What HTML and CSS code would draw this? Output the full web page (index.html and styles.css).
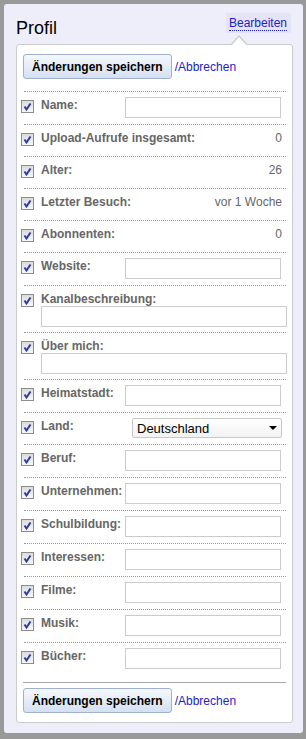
FILE: index.html
```html
<!DOCTYPE html>
<html lang="de">
<head>
<meta charset="UTF-8">
<meta name="viewport" content="width=device-width, initial-scale=1.0">
<title>Profil</title>
<link rel="stylesheet" href="styles.css">
</head>
<body>

<div class="panel">
  <div class="panel-head">
    <h1>Profil</h1>
    <div class="edit-tab"><a href="#">Bearbeiten</a></div>
  </div>

  <div class="box">
    <div class="actions">
      <button class="save">Änderungen speichern</button>
      <a href="#">/Abbrechen</a>
    </div>

    <div class="row">
      <span class="cb"><svg viewBox="0 0 11 11" width="11" height="11"><path d="M2.5 5.5 L4.5 8.5 L8.5 2.5" fill="none" stroke="#2c3c9c" stroke-width="2"/></svg></span>
      <label>Name:</label>
      <input type="text" class="field">
    </div>
    <div class="row">
      <span class="cb"><svg viewBox="0 0 11 11" width="11" height="11"><path d="M2.5 5.5 L4.5 8.5 L8.5 2.5" fill="none" stroke="#2c3c9c" stroke-width="2"/></svg></span>
      <label>Upload-Aufrufe insgesamt:</label>
      <span class="value">0</span>
    </div>
    <div class="row">
      <span class="cb"><svg viewBox="0 0 11 11" width="11" height="11"><path d="M2.5 5.5 L4.5 8.5 L8.5 2.5" fill="none" stroke="#2c3c9c" stroke-width="2"/></svg></span>
      <label>Alter:</label>
      <span class="value">26</span>
    </div>
    <div class="row">
      <span class="cb"><svg viewBox="0 0 11 11" width="11" height="11"><path d="M2.5 5.5 L4.5 8.5 L8.5 2.5" fill="none" stroke="#2c3c9c" stroke-width="2"/></svg></span>
      <label>Letzter Besuch:</label>
      <span class="value">vor 1 Woche</span>
    </div>
    <div class="row">
      <span class="cb"><svg viewBox="0 0 11 11" width="11" height="11"><path d="M2.5 5.5 L4.5 8.5 L8.5 2.5" fill="none" stroke="#2c3c9c" stroke-width="2"/></svg></span>
      <label>Abonnenten:</label>
      <span class="value">0</span>
    </div>
    <div class="row">
      <span class="cb"><svg viewBox="0 0 11 11" width="11" height="11"><path d="M2.5 5.5 L4.5 8.5 L8.5 2.5" fill="none" stroke="#2c3c9c" stroke-width="2"/></svg></span>
      <label>Website:</label>
      <input type="text" class="field">
    </div>
    <div class="row tall">
      <div class="line">
        <span class="cb"><svg viewBox="0 0 11 11" width="11" height="11"><path d="M2.5 5.5 L4.5 8.5 L8.5 2.5" fill="none" stroke="#2c3c9c" stroke-width="2"/></svg></span>
        <label>Kanalbeschreibung:</label>
      </div>
      <input type="text" class="wide">
    </div>
    <div class="row tall">
      <div class="line">
        <span class="cb"><svg viewBox="0 0 11 11" width="11" height="11"><path d="M2.5 5.5 L4.5 8.5 L8.5 2.5" fill="none" stroke="#2c3c9c" stroke-width="2"/></svg></span>
        <label>Über mich:</label>
      </div>
      <input type="text" class="wide">
    </div>
    <div class="row">
      <span class="cb"><svg viewBox="0 0 11 11" width="11" height="11"><path d="M2.5 5.5 L4.5 8.5 L8.5 2.5" fill="none" stroke="#2c3c9c" stroke-width="2"/></svg></span>
      <label>Heimatstadt:</label>
      <input type="text" class="field">
    </div>
    <div class="row">
      <span class="cb"><svg viewBox="0 0 11 11" width="11" height="11"><path d="M2.5 5.5 L4.5 8.5 L8.5 2.5" fill="none" stroke="#2c3c9c" stroke-width="2"/></svg></span>
      <label>Land:</label>
      <div class="select-wrap">
        <select class="country"><option>Deutschland</option></select>
        <span class="arrow"></span>
      </div>
    </div>
    <div class="row">
      <span class="cb"><svg viewBox="0 0 11 11" width="11" height="11"><path d="M2.5 5.5 L4.5 8.5 L8.5 2.5" fill="none" stroke="#2c3c9c" stroke-width="2"/></svg></span>
      <label>Beruf:</label>
      <input type="text" class="field">
    </div>
    <div class="row">
      <span class="cb"><svg viewBox="0 0 11 11" width="11" height="11"><path d="M2.5 5.5 L4.5 8.5 L8.5 2.5" fill="none" stroke="#2c3c9c" stroke-width="2"/></svg></span>
      <label>Unternehmen:</label>
      <input type="text" class="field">
    </div>
    <div class="row">
      <span class="cb"><svg viewBox="0 0 11 11" width="11" height="11"><path d="M2.5 5.5 L4.5 8.5 L8.5 2.5" fill="none" stroke="#2c3c9c" stroke-width="2"/></svg></span>
      <label>Schulbildung:</label>
      <input type="text" class="field">
    </div>
    <div class="row">
      <span class="cb"><svg viewBox="0 0 11 11" width="11" height="11"><path d="M2.5 5.5 L4.5 8.5 L8.5 2.5" fill="none" stroke="#2c3c9c" stroke-width="2"/></svg></span>
      <label>Interessen:</label>
      <input type="text" class="field">
    </div>
    <div class="row">
      <span class="cb"><svg viewBox="0 0 11 11" width="11" height="11"><path d="M2.5 5.5 L4.5 8.5 L8.5 2.5" fill="none" stroke="#2c3c9c" stroke-width="2"/></svg></span>
      <label>Filme:</label>
      <input type="text" class="field">
    </div>
    <div class="row">
      <span class="cb"><svg viewBox="0 0 11 11" width="11" height="11"><path d="M2.5 5.5 L4.5 8.5 L8.5 2.5" fill="none" stroke="#2c3c9c" stroke-width="2"/></svg></span>
      <label>Musik:</label>
      <input type="text" class="field">
    </div>
    <div class="row">
      <span class="cb"><svg viewBox="0 0 11 11" width="11" height="11"><path d="M2.5 5.5 L4.5 8.5 L8.5 2.5" fill="none" stroke="#2c3c9c" stroke-width="2"/></svg></span>
      <label>Bücher:</label>
      <input type="text" class="field">
    </div>

    <div class="actions footer">
      <button class="save">Änderungen speichern</button>
      <a href="#">/Abbrechen</a>
    </div>
  </div>
</div>

</body>
</html>
```

FILE: styles.css
```css
body {
  margin: 0;
  background-color: #999999;
  font-family: "Liberation Sans", Arial, sans-serif;
  font-size: 12px;
  line-height: 14px;
}
a {
  color: #1c1cc8;
  text-decoration: none;
}
.panel {
  margin: 4px 3px 6px 4px;
  padding: 0 10px 10px 12px;
  background-color: #eeeefb;
  border-radius: 3px;
}
.panel-head {
  display: flex;
  justify-content: space-between;
  align-items: flex-start;
  height: 40px;
}
h1 {
  margin: 13px 0 0 0;
  font-size: 18px;
  line-height: 22px;
  font-weight: normal;
  color: #000;
}
.edit-tab {
  margin: 9px 2px 0 0;
  padding: 3px 4px 2px 3px;
  background-color: #e4e4f6;
}
.edit-tab a {
  display: inline-block;
  border-bottom: 1px dotted #1c1cc8;
}
.box {
  position: relative;
  background: #fff;
  border: 1px solid #cccccc;
  border-radius: 3px;
  padding: 9px 6px 9px 6px;
}
/* little pointer up to "Bearbeiten" */
.box::before {
  content: '';
  position: absolute;
  left: 213px;
  top: -10px;
  border-left: 9px solid transparent;
  border-right: 9px solid transparent;
  border-bottom: 10px solid #cccccc;
}
.box::after {
  content: '';
  position: absolute;
  left: 214px;
  top: -8px;
  border-left: 8px solid transparent;
  border-right: 8px solid transparent;
  border-bottom: 9px solid #fff;
}
.actions {
  display: flex;
  align-items: center;
  margin-bottom: 12px;
}
.actions a {
  margin-left: 3px;
}
.save {
  height: 25px;
  padding: 0 8px;
  font-family: "Liberation Sans", Arial, sans-serif;
  font-size: 12px;
  font-weight: bold;
  color: #000;
  background: linear-gradient(#f5f8fd, #d4e0f2);
  border: 1px solid #9fb0cf;
  border-radius: 3px;
}
.footer {
  margin: 7px 0 0 0;
  padding-top: 5px;
  border-top: 1px solid #aaaaaa;
}
.row {
  display: flex;
  align-items: flex-start;
  margin: 0 0 0 1px;
  padding: 5px 0 6px 0;
  min-height: 20px;
  border-top: 1px dotted #999999;
}
.row label {
  width: 84px;
  flex-shrink: 0;
  margin-top: 1px;
  font-weight: bold;
  color: #666666;
  white-space: nowrap;
}
.cb {
  flex-shrink: 0;
  display: flex;
  align-items: center;
  justify-content: center;
  box-sizing: border-box;
  width: 13px;
  height: 13px;
  margin: 3px 7px 0 -3px;
  border: 1px solid #8c8c8c;
  background: linear-gradient(#dcdcdc, #f7f7f7);
}
.value {
  margin: 1px 4px 0 auto;
  color: #666666;
}
.field {
  box-sizing: border-box;
  width: 156px;
  height: 21px;
  margin: 0;
  padding: 0 3px;
  border: 1px solid #cccccc;
}
.tall {
  display: block;
  padding-bottom: 5px;
}
.line {
  display: flex;
  align-items: flex-start;
  height: 15px;
}
.wide {
  display: block;
  box-sizing: border-box;
  width: 246px;
  height: 21px;
  margin: 0 0 0 17px;
  border: 1px solid #cccccc;
}
.select-wrap {
  position: relative;
  margin-left: 7px;
}
.country {
  appearance: none;
  -webkit-appearance: none;
  box-sizing: border-box;
  width: 150px;
  height: 20px;
  margin: 0;
  padding: 0 0 0 4px;
  font-family: "Liberation Sans", Arial, sans-serif;
  font-size: 13px;
  color: #000;
  background: linear-gradient(#ffffff, #f2f2f2);
  border: 1px solid #c8c8c8;
  border-radius: 2px;
}
.arrow {
  position: absolute;
  right: 5px;
  top: 8px;
  border-left: 4px solid transparent;
  border-right: 4px solid transparent;
  border-top: 4px solid #000;
  pointer-events: none;
}
```
